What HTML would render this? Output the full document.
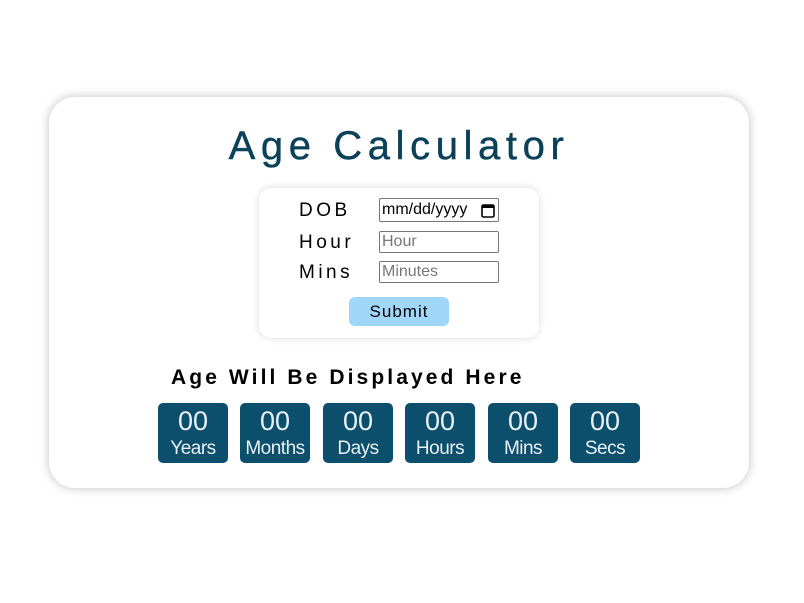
<!DOCTYPE html>
<html><head><style>
body{margin:0;width:804px;height:603px;background:#fff;font-family:"Liberation Sans",sans-serif;position:relative;overflow:hidden}
.card{position:absolute;left:49px;top:97px;width:700px;height:391px;border-radius:26px;background:#fff;box-shadow:0 0 10px rgba(0,0,0,0.25)}
h1{position:absolute;left:-3px;width:804px;top:123px;margin:0;text-align:center;font-size:40px;font-weight:normal;letter-spacing:5.6px;color:#0a4158;line-height:46px;-webkit-text-stroke:0.4px #0a4158}
.form{position:absolute;left:259px;top:188px;width:280px;height:150px;border-radius:12px;background:#fff;box-shadow:0 0 8px rgba(0,0,0,0.15)}
.lbl{position:absolute;left:299px;font-size:19px;letter-spacing:3.5px;color:#000;line-height:22px}
.inp{position:absolute;left:379px;width:116px;height:20px;border:1px solid #767676;border-radius:2px;font-size:16px;color:#777;line-height:20px;padding-left:2px;overflow:hidden;white-space:nowrap}
.btn{position:absolute;left:349px;top:297px;width:100px;height:29px;background:#9fd6f9;border-radius:6px;text-align:center;font-size:17px;line-height:29px;letter-spacing:1px;color:#000}
h2{position:absolute;left:171px;width:360px;top:365px;margin:0;text-align:left;font-size:21px;font-weight:bold;letter-spacing:3.1px;line-height:26px;white-space:nowrap}
.box{position:absolute;top:403px;width:70px;height:60px;background:#0b4f6c;border-radius:5px;color:#e8f0f4;text-align:center}
.box .n{font-size:27px;line-height:30px;margin-top:3px}
.box .t{font-size:19px;line-height:26px;letter-spacing:-0.5px}
</style></head><body>
<div class="card"></div>
<h1>Age Calculator</h1>
<div class="form"></div>
<div class="lbl" style="top:200px">DOB</div>
<div class="lbl" style="top:232px">Hour</div>
<div class="lbl" style="top:262px">Mins</div>
<div class="inp" style="top:198px;height:22px;line-height:22px;color:#000">mm/dd/yyyy<svg style="position:absolute;right:3px;top:4px;background:#fff" width="14" height="15" viewBox="0 0 14 15"><rect x="1" y="2" width="12" height="12" rx="1.5" fill="#fff" stroke="#000" stroke-width="1.6"/><rect x="1" y="2" width="12" height="3" fill="#000"/></svg></div>
<div class="inp" style="top:231px">Hour</div>
<div class="inp" style="top:261px">Minutes</div>
<div class="btn">Submit</div>
<h2>Age Will Be Displayed Here</h2>
<div class="box" style="left:158px"><div class="n">00</div><div class="t">Years</div></div>
<div class="box" style="left:240px"><div class="n">00</div><div class="t">Months</div></div>
<div class="box" style="left:323px"><div class="n">00</div><div class="t">Days</div></div>
<div class="box" style="left:405px"><div class="n">00</div><div class="t">Hours</div></div>
<div class="box" style="left:488px"><div class="n">00</div><div class="t">Mins</div></div>
<div class="box" style="left:570px"><div class="n">00</div><div class="t">Secs</div></div>
</body></html>
